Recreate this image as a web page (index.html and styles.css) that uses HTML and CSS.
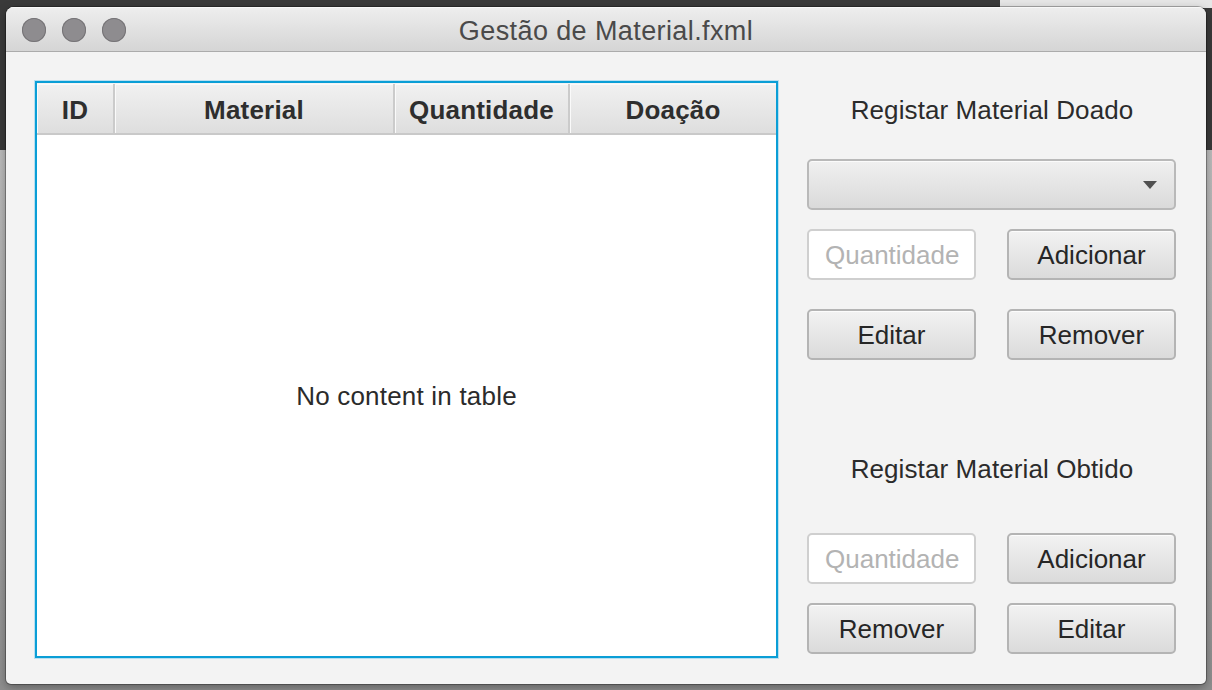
FILE: index.html
```html
<!DOCTYPE html>
<html lang="pt">
<head>
<meta charset="utf-8">
<title>Gestão de Material.fxml</title>
<link rel="stylesheet" href="styles.css">
</head>
<body>
<div class="desktop">
  <div class="window">
    <div class="titlebar">
      <div class="lights">
        <span class="light"></span><span class="light"></span><span class="light"></span>
      </div>
      <div class="title">Gestão de Material.fxml</div>
      <div></div>
    </div>
    <div class="content">
      <div class="table">
        <div class="thead">
          <div class="th c-id">ID</div>
          <div class="th c-mat">Material</div>
          <div class="th c-qty">Quantidade</div>
          <div class="th c-doa">Doação</div>
        </div>
        <div class="tbody">No content in table</div>
      </div>
      <div class="side">
        <div class="label l1">Registar Material Doado</div>
        <div class="combo"><span class="arrow"></span></div>
        <div class="row r1">
          <div class="field">Quantidade</div>
          <div class="btn">Adicionar</div>
        </div>
        <div class="row r2">
          <div class="btn">Editar</div>
          <div class="btn">Remover</div>
        </div>
        <div class="label l2">Registar Material Obtido</div>
        <div class="row r3">
          <div class="field">Quantidade</div>
          <div class="btn">Adicionar</div>
        </div>
        <div class="row r4">
          <div class="btn">Remover</div>
          <div class="btn">Editar</div>
        </div>
      </div>
    </div>
  </div>
</div>
</body>
</html>
```

FILE: styles.css
```css
* { box-sizing: border-box; }
html, body { margin: 0; padding: 0; }
body {
  width: 1212px;
  height: 690px;
  overflow: hidden;
  font-family: "Liberation Sans", Arial, sans-serif;
  background:
    linear-gradient(to right, #3a3a3a 0, #3a3a3a 1000px, #e6e6e6 1000px) top / 100% 8px no-repeat,
    linear-gradient(to bottom, #3a3a3a 0, #3a3a3a 150px, #bcbcbc 150px, #8e8e8e 100%);
}
.desktop {
  padding: 7px 6px 6px 6px;
}
.window {
  width: 1200px;
  height: 677px;
  border-radius: 8px 8px 5px 5px;
  overflow: hidden;
  background: #f3f3f3;
  box-shadow: 0 0 0 1px rgba(0,0,0,0.28), 0 3px 10px rgba(0,0,0,0.35);
  display: flex;
  flex-direction: column;
}
.titlebar {
  height: 45px;
  flex: none;
  display: grid;
  grid-template-columns: 1fr auto 1fr;
  align-items: center;
  background: linear-gradient(to bottom, #eeeeee, #d5d5d5);
  border-bottom: 1px solid #ababab;
  box-shadow: inset 0 1px 0 #f8f8f8;
}
.lights {
  display: flex;
  gap: 16px;
  padding-left: 16px;
  padding-top: 1px;
}
.light {
  width: 24px;
  height: 24px;
  border-radius: 50%;
  background: #8e8c8f;
  box-shadow: inset 0 0 0 1px #767477;
}
.title {
  font-size: 27px;
  color: #4a4a4a;
  letter-spacing: 0.4px;
  padding-top: 4px;
}
.content {
  flex: 1;
  display: flex;
  padding: 29px 30px 26px 29px;
  gap: 29px;
}
.table {
  width: 743px;
  border: 2px solid #0a9ed6;
  box-shadow: 0 0 0 1px #b8dff0;
  background: #fff;
  display: flex;
  flex-direction: column;
}
.thead {
  display: flex;
  height: 52px;
  padding-top: 1px;
  background: #f4f4f4;
  border-bottom: 2px solid #c9c9c9;
}
.th {
  display: flex;
  align-items: center;
  justify-content: center;
  padding-top: 4px;
  font-weight: bold;
  font-size: 26px;
  letter-spacing: 0.2px;
  color: #2e2e2e;
  background: linear-gradient(to bottom, #f1f1f1, #dedede);
  border-right: 2px solid #cbcbcb;
  box-shadow: inset 1px 1px 0 #fafafa;
}
.c-id { width: 78px; }
.c-mat { width: 280px; }
.c-qty { width: 175px; }
.c-doa { flex: 1; border-right: none; }
.tbody {
  flex: 1;
  display: flex;
  align-items: center;
  justify-content: center;
  font-size: 26px;
  color: #2b2b2b;
  letter-spacing: 0.2px;
  padding-top: 2px;
}
.side {
  width: 369px;
  display: flex;
  flex-direction: column;
}
.label {
  height: 30px;
  line-height: 30px;
  text-align: center;
  font-size: 26px;
  color: #2b2b2b;
  letter-spacing: 0.1px;
}
.l1 { margin-top: 14px; padding-left: 1px; }
.l2 { margin-top: 94px; padding-left: 1px; }
.combo {
  margin-top: 34px;
  height: 51px;
  border: 2px solid #b9b9b9;
  border-radius: 5px;
  background: linear-gradient(to bottom, #f0f0f0, #dadada);
  box-shadow: inset 0 1px 0 #fbfbfb;
  display: flex;
  align-items: center;
  justify-content: flex-end;
  padding-right: 17px;
}
.arrow {
  width: 0;
  height: 0;
  border-left: 7px solid transparent;
  border-right: 7px solid transparent;
  border-top: 8px solid #505050;
}
.row {
  display: grid;
  grid-template-columns: 169px 169px;
  justify-content: space-between;
}
.r1 { margin-top: 19px; }
.r2 { margin-top: 29px; }
.r3 { margin-top: 49px; }
.r4 { margin-top: 19px; }
.btn, .field {
  height: 51px;
  border-radius: 5px;
  font-size: 26px;
  display: flex;
  align-items: center;
  padding-top: 1px;
}
.btn {
  justify-content: center;
  color: #262626;
  border: 2px solid #b4b4b4;
  background: linear-gradient(to bottom, #f2f2f2, #dbdbdb);
  box-shadow: inset 0 1px 0 #fcfcfc;
}
.field {
  padding-left: 16px;
  color: #b3b3b3;
  background: #fff;
  border: 2px solid #cfcfcf;
}
```
